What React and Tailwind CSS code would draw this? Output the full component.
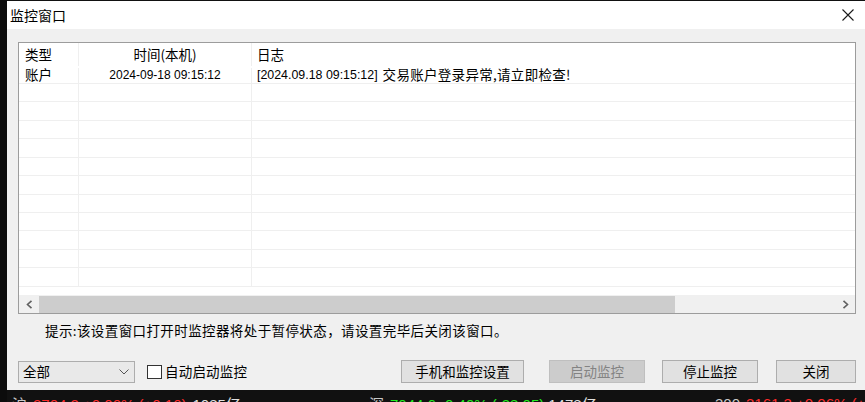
import React from "react";

const CJK = { fontFamily: '"Noto Sans CJK SC", "Liberation Sans", sans-serif' };
const LAT = { fontFamily: '"Liberation Sans", "Noto Sans CJK SC", sans-serif' };

function Row({ type, time, log, header }) {
  return (
    <div className={`flex ${header ? "h-[22.5px]" : "h-[18.45px] border-b border-[#efefef]"} shrink-0`}>
      <div className="w-[60px] border-r border-[#efefef] pl-[6px] flex items-center text-[13.5px] text-black leading-none" style={CJK}>
        {type}
      </div>
      <div className="w-[173px] border-r border-[#efefef] flex items-center justify-center text-black leading-none">
        {time}
      </div>
      <div className="flex-1 pl-[5px] flex items-center text-black leading-none whitespace-nowrap">
        {log}
      </div>
    </div>
  );
}

function Btn({ children, w, disabled }) {
  return (
    <div
      className={`h-[23px] ${w} flex items-center justify-center border text-[13.5px] leading-none ${
        disabled ? "bg-[#cccccc] border-[#bfbfbf] text-[#838383]" : "bg-[#e1e1e1] border-[#adadad] text-black"
      }`}
      style={CJK}
    >
      {children}
    </div>
  );
}

export default function App() {
  const emptyRows = Array.from({ length: 11 });
  return (
    <div className="w-[865px] h-[402px] bg-[#111111] flex overflow-hidden">
      <div className="w-[7px] bg-[#0c0c0c] shrink-0" />
      <div className="flex-1 flex flex-col pt-[1px]">
        {/* title bar */}
        <div className="h-[28px] bg-white flex items-center justify-between pl-[3px] pr-[11px] shrink-0">
          <span className="text-[14px] text-black leading-none" style={CJK}>监控窗口</span>
          <svg width="12" height="12" viewBox="0 0 12 12">
            <path d="M0.5 0.5 L11.5 11.5 M11.5 0.5 L0.5 11.5" stroke="#1a1a1a" strokeWidth="1.1" />
          </svg>
        </div>
        {/* body */}
        <div className="h-[361px] bg-[#f0f0f0] flex flex-col pl-[11px] pr-[9px] pt-[13px] shrink-0">
          <div className="h-[272px] border border-[#9c9c9c] bg-white flex flex-col overflow-hidden">
            <Row
              header
              type="类型"
              time={<span className="text-[13.5px]" style={CJK}>时间(本机)</span>}
              log={<span className="text-[13.5px]" style={CJK}>日志</span>}
            />
            <div className="border-b border-[#efefef] h-[18.45px] flex pt-[2px]">
              <div className="w-[60px] border-r border-[#efefef] pl-[6px] flex items-center text-[13.5px] text-black leading-none" style={CJK}>账户</div>
              <div className="w-[173px] border-r border-[#efefef] flex items-center justify-center text-[12px] text-black leading-none" style={LAT}>
                2024-09-18 09:15:12
              </div>
              <div className="flex-1 pl-[5px] flex items-center leading-none whitespace-nowrap text-black">
                <span className="text-[12.4px]" style={LAT}>[2024.09.18 09:15:12]</span>
                <span className="text-[13.5px] ml-[5px] tracking-[0.3px]" style={CJK}>交易账户登录异常,请立即检查!</span>
              </div>
            </div>
            {emptyRows.map((_, i) => (
              <Row key={i} />
            ))}
            <div className="flex-1" />
            {/* horizontal scrollbar */}
            <div className="h-[18px] bg-[#f0f0f0] flex items-center shrink-0">
              <div className="w-[20px] h-full flex items-center justify-center">
                <svg width="7" height="9" viewBox="0 0 7 9">
                  <path d="M5.5 0.8 L1.5 4.5 L5.5 8.2" fill="none" stroke="#606060" strokeWidth="1.6" />
                </svg>
              </div>
              <div className="w-[636px] h-[17px] bg-[#cdcdcd]" />
              <div className="flex-1" />
              <div className="w-[20px] h-full flex items-center justify-center">
                <svg width="7" height="9" viewBox="0 0 7 9">
                  <path d="M1.5 0.8 L5.5 4.5 L1.5 8.2" fill="none" stroke="#606060" strokeWidth="1.6" />
                </svg>
              </div>
            </div>
          </div>
          {/* hint */}
          <div className="h-[34px] flex items-center pl-[27px] text-[13.5px] tracking-[0.4px] text-black leading-none whitespace-nowrap" style={CJK}>
            提示:该设置窗口打开时监控器将处于暂停状态，请设置完毕后关闭该窗口。
          </div>
          {/* bottom controls */}
          <div className="mt-[12px] flex items-center h-[23px]">
            <div className="w-[117px] h-[22px] border border-[#adadad] bg-[#e9e9e9] flex items-center justify-between pl-[4px] pr-[5px]">
              <span className="text-[13.5px] text-black leading-none" style={CJK}>全部</span>
              <svg width="10" height="6" viewBox="0 0 10 6">
                <path d="M0.5 0.5 L5 5 L9.5 0.5" fill="none" stroke="#555" strokeWidth="1" />
              </svg>
            </div>
            <div className="ml-[12px] w-[15px] h-[14px] border border-[#333] bg-white" />
            <span className="ml-[3px] text-[13.5px] tracking-[0.2px] text-black leading-none" style={CJK}>自动启动监控</span>
            <div className="flex-1" />
            <Btn w="w-[123px]">手机和监控设置</Btn>
            <div className="w-[25px]" />
            <Btn w="w-[96px]" disabled>启动监控</Btn>
            <div className="w-[17px]" />
            <Btn w="w-[96px]">停止监控</Btn>
            <div className="w-[18px]" />
            <Btn w="w-[80px]">关闭</Btn>
          </div>
        </div>
        {/* taskbar strip */}
        <div className="flex-1 bg-[#111111] relative overflow-hidden">
          <div className="absolute left-[5px] top-[6px] flex items-baseline whitespace-nowrap text-[15px] leading-none" style={LAT}>
            <span className="text-[#c8c8c8]" style={CJK}>沪</span>
            <span className="ml-[6px] text-[#ff2a2a]">3704.3 +0.00% (+0.10)</span>
            <span className="ml-[6px] text-[#e0e0e0]">1085亿</span>
          </div>
          <div className="absolute left-[362px] top-[6px] flex items-baseline whitespace-nowrap text-[15px] leading-none" style={LAT}>
            <span className="text-[#c8c8c8]" style={CJK}>深</span>
            <span className="ml-[6px] text-[#22ee22]">7044.6 -0.40% (-38.05)</span>
            <span className="ml-[4px] text-[#e0e0e0]">1478亿</span>
          </div>
          <div className="absolute left-[708px] top-[6px] flex items-baseline whitespace-nowrap text-[15px] leading-none" style={LAT}>
            <span className="text-[#c8c8c8]">300</span>
            <span className="ml-[6px] text-[#ff2a2a]">3161.3 +0.06% (+2.0)</span>
          </div>
        </div>
      </div>
    </div>
  );
}
